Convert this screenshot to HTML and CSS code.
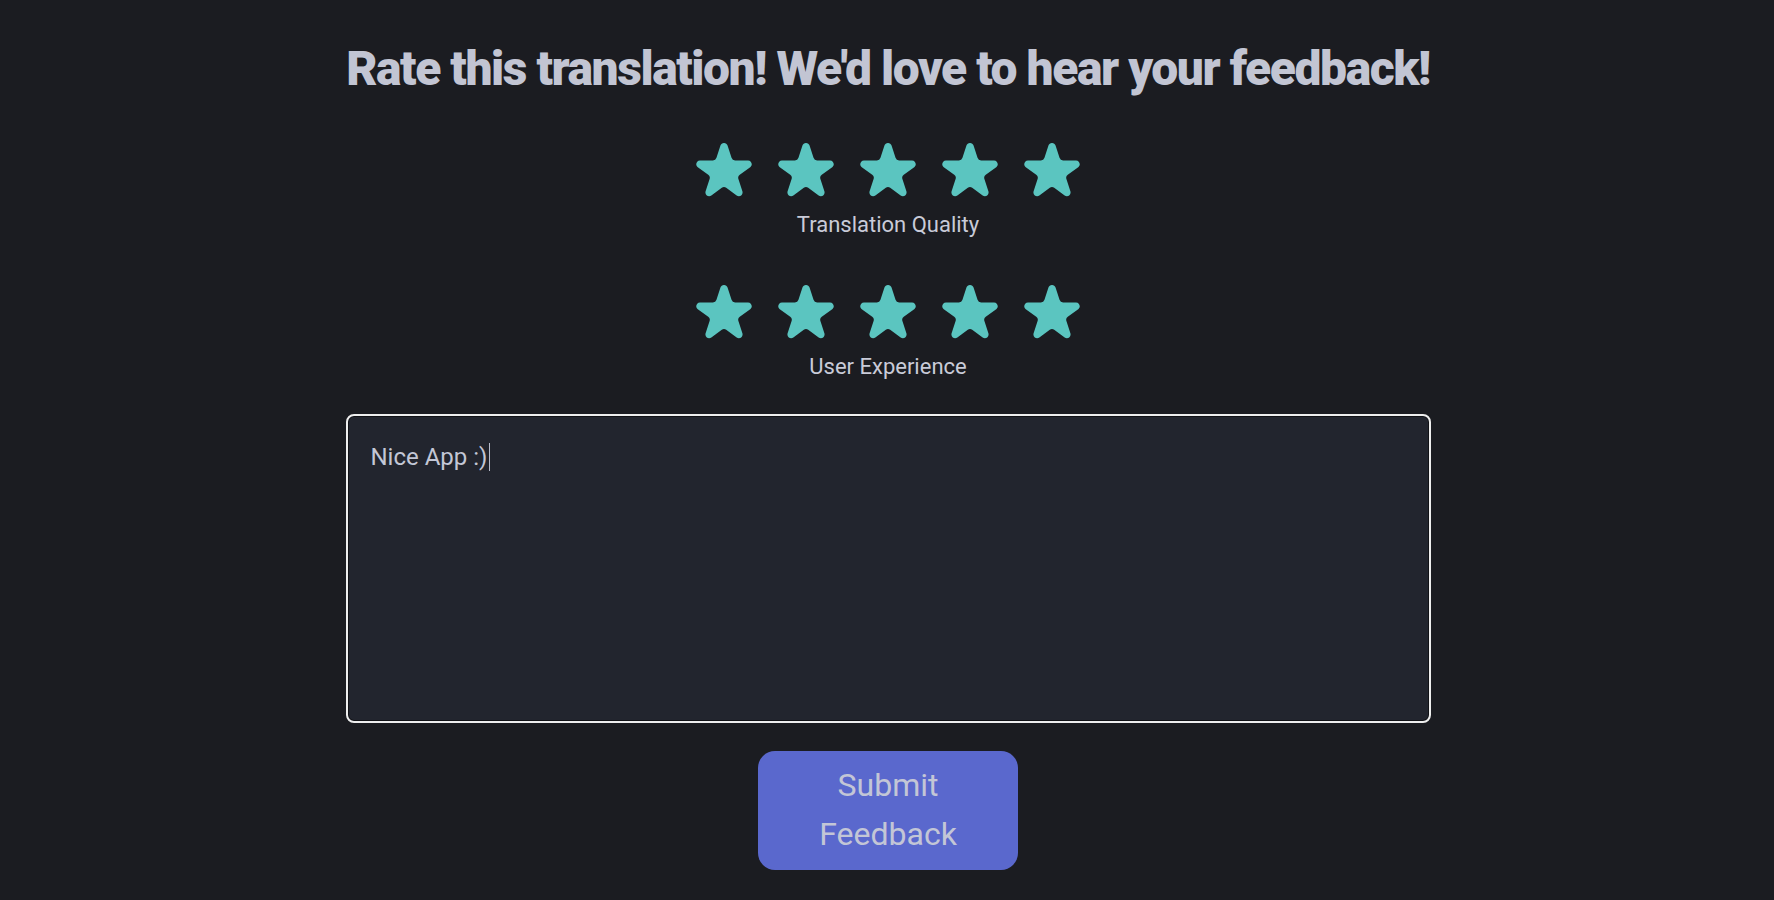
FILE: index.html
```html
<!DOCTYPE html>
<html lang="en">
<head>
<meta charset="utf-8">
<title>Feedback</title>
<link rel="stylesheet" href="styles.css">
</head>
<body>
<main class="page">
  <h1 class="title">Rate this translation! We'd love to hear your feedback!</h1>

  <section class="rating">
    <div class="stars">
      <svg class="star" viewBox="2.5 2.24 15 14.46"><path d="M9.049 2.927c.3-.921 1.603-.921 1.902 0l1.07 3.292a1 1 0 00.95.69h3.462c.969 0 1.371 1.24.588 1.81l-2.8 2.034a1 1 0 00-.364 1.118l1.07 3.292c.3.921-.755 1.688-1.54 1.118l-2.8-2.034a1 1 0 00-1.175 0l-2.8 2.034c-.784.57-1.838-.197-1.539-1.118l1.07-3.292a1 1 0 00-.364-1.118L2.98 8.72c-.783-.57-.38-1.81.588-1.81h3.461a1 1 0 00.951-.69l1.07-3.292z"/></svg>
      <svg class="star" viewBox="2.5 2.24 15 14.46"><path d="M9.049 2.927c.3-.921 1.603-.921 1.902 0l1.07 3.292a1 1 0 00.95.69h3.462c.969 0 1.371 1.24.588 1.81l-2.8 2.034a1 1 0 00-.364 1.118l1.07 3.292c.3.921-.755 1.688-1.54 1.118l-2.8-2.034a1 1 0 00-1.175 0l-2.8 2.034c-.784.57-1.838-.197-1.539-1.118l1.07-3.292a1 1 0 00-.364-1.118L2.98 8.72c-.783-.57-.38-1.81.588-1.81h3.461a1 1 0 00.951-.69l1.07-3.292z"/></svg>
      <svg class="star" viewBox="2.5 2.24 15 14.46"><path d="M9.049 2.927c.3-.921 1.603-.921 1.902 0l1.07 3.292a1 1 0 00.95.69h3.462c.969 0 1.371 1.24.588 1.81l-2.8 2.034a1 1 0 00-.364 1.118l1.07 3.292c.3.921-.755 1.688-1.54 1.118l-2.8-2.034a1 1 0 00-1.175 0l-2.8 2.034c-.784.57-1.838-.197-1.539-1.118l1.07-3.292a1 1 0 00-.364-1.118L2.98 8.72c-.783-.57-.38-1.81.588-1.81h3.461a1 1 0 00.951-.69l1.07-3.292z"/></svg>
      <svg class="star" viewBox="2.5 2.24 15 14.46"><path d="M9.049 2.927c.3-.921 1.603-.921 1.902 0l1.07 3.292a1 1 0 00.95.69h3.462c.969 0 1.371 1.24.588 1.81l-2.8 2.034a1 1 0 00-.364 1.118l1.07 3.292c.3.921-.755 1.688-1.54 1.118l-2.8-2.034a1 1 0 00-1.175 0l-2.8 2.034c-.784.57-1.838-.197-1.539-1.118l1.07-3.292a1 1 0 00-.364-1.118L2.98 8.72c-.783-.57-.38-1.81.588-1.81h3.461a1 1 0 00.951-.69l1.07-3.292z"/></svg>
      <svg class="star" viewBox="2.5 2.24 15 14.46"><path d="M9.049 2.927c.3-.921 1.603-.921 1.902 0l1.07 3.292a1 1 0 00.95.69h3.462c.969 0 1.371 1.24.588 1.81l-2.8 2.034a1 1 0 00-.364 1.118l1.07 3.292c.3.921-.755 1.688-1.54 1.118l-2.8-2.034a1 1 0 00-1.175 0l-2.8 2.034c-.784.57-1.838-.197-1.539-1.118l1.07-3.292a1 1 0 00-.364-1.118L2.98 8.72c-.783-.57-.38-1.81.588-1.81h3.461a1 1 0 00.951-.69l1.07-3.292z"/></svg>
    </div>
    <p class="label">Translation Quality</p>
  </section>

  <section class="rating">
    <div class="stars">
      <svg class="star" viewBox="2.5 2.24 15 14.46"><path d="M9.049 2.927c.3-.921 1.603-.921 1.902 0l1.07 3.292a1 1 0 00.95.69h3.462c.969 0 1.371 1.24.588 1.81l-2.8 2.034a1 1 0 00-.364 1.118l1.07 3.292c.3.921-.755 1.688-1.54 1.118l-2.8-2.034a1 1 0 00-1.175 0l-2.8 2.034c-.784.57-1.838-.197-1.539-1.118l1.07-3.292a1 1 0 00-.364-1.118L2.98 8.72c-.783-.57-.38-1.81.588-1.81h3.461a1 1 0 00.951-.69l1.07-3.292z"/></svg>
      <svg class="star" viewBox="2.5 2.24 15 14.46"><path d="M9.049 2.927c.3-.921 1.603-.921 1.902 0l1.07 3.292a1 1 0 00.95.69h3.462c.969 0 1.371 1.24.588 1.81l-2.8 2.034a1 1 0 00-.364 1.118l1.07 3.292c.3.921-.755 1.688-1.54 1.118l-2.8-2.034a1 1 0 00-1.175 0l-2.8 2.034c-.784.57-1.838-.197-1.539-1.118l1.07-3.292a1 1 0 00-.364-1.118L2.98 8.72c-.783-.57-.38-1.81.588-1.81h3.461a1 1 0 00.951-.69l1.07-3.292z"/></svg>
      <svg class="star" viewBox="2.5 2.24 15 14.46"><path d="M9.049 2.927c.3-.921 1.603-.921 1.902 0l1.07 3.292a1 1 0 00.95.69h3.462c.969 0 1.371 1.24.588 1.81l-2.8 2.034a1 1 0 00-.364 1.118l1.07 3.292c.3.921-.755 1.688-1.54 1.118l-2.8-2.034a1 1 0 00-1.175 0l-2.8 2.034c-.784.57-1.838-.197-1.539-1.118l1.07-3.292a1 1 0 00-.364-1.118L2.98 8.72c-.783-.57-.38-1.81.588-1.81h3.461a1 1 0 00.951-.69l1.07-3.292z"/></svg>
      <svg class="star" viewBox="2.5 2.24 15 14.46"><path d="M9.049 2.927c.3-.921 1.603-.921 1.902 0l1.07 3.292a1 1 0 00.95.69h3.462c.969 0 1.371 1.24.588 1.81l-2.8 2.034a1 1 0 00-.364 1.118l1.07 3.292c.3.921-.755 1.688-1.54 1.118l-2.8-2.034a1 1 0 00-1.175 0l-2.8 2.034c-.784.57-1.838-.197-1.539-1.118l1.07-3.292a1 1 0 00-.364-1.118L2.98 8.72c-.783-.57-.38-1.81.588-1.81h3.461a1 1 0 00.951-.69l1.07-3.292z"/></svg>
      <svg class="star" viewBox="2.5 2.24 15 14.46"><path d="M9.049 2.927c.3-.921 1.603-.921 1.902 0l1.07 3.292a1 1 0 00.95.69h3.462c.969 0 1.371 1.24.588 1.81l-2.8 2.034a1 1 0 00-.364 1.118l1.07 3.292c.3.921-.755 1.688-1.54 1.118l-2.8-2.034a1 1 0 00-1.175 0l-2.8 2.034c-.784.57-1.838-.197-1.539-1.118l1.07-3.292a1 1 0 00-.364-1.118L2.98 8.72c-.783-.57-.38-1.81.588-1.81h3.461a1 1 0 00.951-.69l1.07-3.292z"/></svg>
    </div>
    <p class="label">User Experience</p>
  </section>

  <div class="comment"><span class="comment-text">Nice App :)</span><span class="caret"></span></div>

  <button class="submit" type="button">Submit Feedback</button>
</main>
</body>
</html>
```

FILE: styles.css
```css
html, body {
  margin: 0;
  padding: 0;
  background: #1b1c21;
}

body {
  font-family: Roboto, "Noto Sans", sans-serif;
  color: #c9cbd8;
}

.page {
  display: flex;
  flex-direction: column;
  align-items: center;
  padding: 41px 0 0 2px;
}

.title {
  margin: 0;
  font-size: 48px;
  line-height: 55px;
  font-weight: 900;
  letter-spacing: -1.45px;
  color: #c2c5d3;
  white-space: nowrap;
}

.rating {
  display: flex;
  flex-direction: column;
  align-items: center;
  margin-top: 47px;
}

.stars {
  display: flex;
  gap: 26px;
}

.star {
  width: 56px;
  height: 54px;
  fill: #5bc5c0;
  display: block;
}

.label {
  margin: 15px 0 0;
  font-size: 22px;
  line-height: 26px;
  color: #c9cbd8;
}

.comment {
  box-sizing: border-box;
  width: 1085px;
  height: 309px;
  margin-top: 34px;
  background: #22252e;
  border: 2px solid #eeeeee;
  border-radius: 8px;
  box-shadow: inset 0 0 0 1px #111216;
  padding: 26px 23px;
  font-size: 24px;
  line-height: 30px;
  color: #c3c7d6;
  display: flex;
  align-items: flex-start;
}

.caret {
  display: inline-block;
  width: 1px;
  height: 28px;
  margin-top: 1px;
  margin-left: 2px;
  background: #b8bccb;
}

.submit {
  margin-top: 28px;
  width: 260px;
  height: 119px;
  padding: 9px 40px 10px;
  border: none;
  border-radius: 17px;
  background: #5a68cd;
  color: #c3c6d6;
  font-family: Roboto, "Noto Sans", sans-serif;
  font-size: 32px;
  line-height: 49px;
  text-align: center;
}
```
